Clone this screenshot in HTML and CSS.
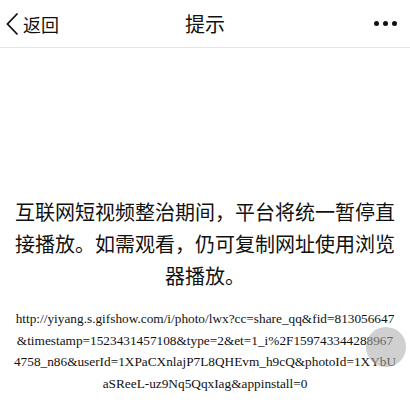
FILE: index.html
```html
<!DOCTYPE html>
<html lang="zh">
<head>
<meta charset="utf-8">
<link rel="stylesheet" href="styles.css">
</head>
<body>
<header class="nav">
  <div class="back">
    <svg class="chev" width="14" height="24" viewBox="0 0 14 24"><path d="M12.5 1.5 L2.5 12 L12.5 22.5" fill="none" stroke="#111" stroke-width="1.8"/></svg>
    <span>返回</span>
  </div>
  <div class="title">提示</div>
  <div class="more"><i></i><i></i><i></i></div>
</header>
<main class="content">
  <p class="msg">互联网短视频整治期间，平台将统一暂停直接播放。如需观看，仍可复制网址使用浏览器播放。</p>
  <p class="url"><span>http://yiyang.s.gifshow.com/i/photo/lwx?cc=share_qq&amp;fid=813056647</span><span>&amp;timestamp=1523431457108&amp;type=2&amp;et=1_i%2F159743344288967</span><span>4758_n86&amp;userId=1XPaCXnlajP7L8QHEvm_h9cQ&amp;photoId=1XYbU</span><span>aSReeL-uz9Nq5QqxIag&amp;appinstall=0</span></p>
</main>
<div class="float-btn"></div>
</body>
</html>
```
FILE: styles.css
```css
html, body { margin: 0; padding: 0; background: #fff; }
body { width: 410px; height: 409px; overflow: hidden; position: relative; font-family: "Noto Sans CJK SC", "Noto Sans", sans-serif; color: #111; }
.nav { height: 47px; border-bottom: 1px solid #e6e6e6; display: flex; align-items: center; position: relative; }
.back { display: flex; align-items: center; padding-left: 5px; font-size: 18px; height: 100%; }
.chev { margin-right: 4px; }
.title { position: absolute; left: 0; right: 0; top: 0; height: 47px; line-height: 47px; text-align: center; font-size: 20px; pointer-events: none; }
.more { margin-left: auto; margin-right: 13px; display: flex; gap: 4px; }
.more i { width: 5px; height: 5px; border-radius: 50%; background: #111; display: block; }
.content { padding: 0 14px; }
.msg { margin: 148px 0 0; font-size: 20px; line-height: 32px; text-align: center; letter-spacing: 0; }
.url { margin: 16px 0 0; font-family: "Liberation Serif", serif; font-size: 13.3px; line-height: 21.5px; text-align: center; color: #111; display: flex; flex-direction: column; align-items: center; }
.url span { white-space: nowrap; }
.float-btn { position: absolute; left: 366px; top: 327px; width: 40px; height: 40px; border-radius: 50%; background: rgba(170,170,170,0.55); }
```
